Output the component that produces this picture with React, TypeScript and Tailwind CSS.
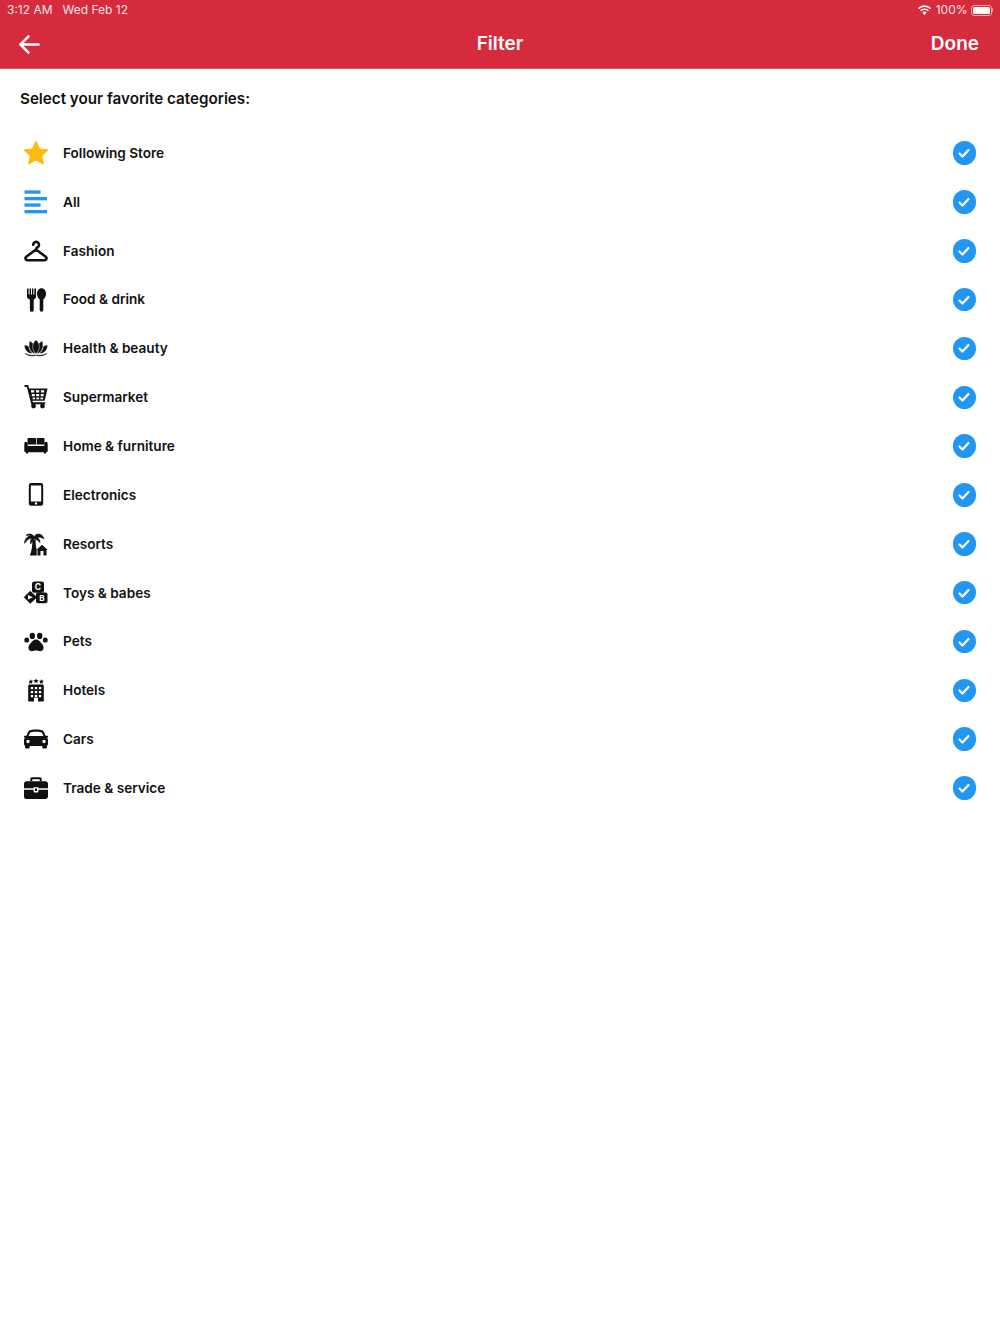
import { ReactNode } from "react";

const Svg = ({ children }: { children: ReactNode }) => (
  <svg viewBox="0 0 28 28" className="w-7 h-7 shrink-0" fill="currentColor">
    {children}
  </svg>
);

const icons: Record<string, ReactNode> = {
  star: (
    <path
      d="M14 2.600l3.400 7.500 8.100.9-6 5.600 1.600 8.100L14 20.600l-7.100 4.100 1.600-8.100-6-5.600 8.100-.9z"
      fill="#ffbb0d"
      stroke="#ffbb0d"
      strokeWidth="1.400"
      strokeLinejoin="round"
    />
  ),
  all: (
    <g fill="#2196f3">
      <rect x="2.500" y="2.400" width="16" height="3.300" />
      <rect x="2.500" y="9" width="22.500" height="3.300" />
      <rect x="2.500" y="15.400" width="16" height="3.300" />
      <rect x="2.500" y="22" width="22.500" height="3.300" />
    </g>
  ),
  hanger: (
    <path
      d="M11.200 7.800a2.900 2.900 0 1 1 4.500 2.400c-1.100.7-1.700 1.200-1.700 2.300M14 12.500l9.400 7c2 1.500 1.200 3.700-1 3.700H5.600c-2.200 0-3-2.200-1-3.700z"
      fill="none"
      stroke="currentColor"
      strokeWidth="2.600"
      strokeLinecap="round"
      strokeLinejoin="round"
    />
  ),
  food: (
    <g>
      <path d="M5 2.500h1.600v6h1v-6h1.400v6h1v-6h1.400v6h1V2.500H14v8c0 1.600-1 2.600-2.300 3v10.400a1.900 1.900 0 0 1-3.800 0V13.500C6 13.100 5 12.100 5 10.500z" />
      <path d="M19.500 2.300c2.600 0 4.500 2.400 4.500 5.500 0 2.800-1.300 4.800-2.700 5.500v10.600a1.800 1.800 0 0 1-3.600 0V13.300c-1.400-.7-2.700-2.700-2.700-5.500 0-3.100 1.900-5.500 4.500-5.500z" />
    </g>
  ),
  lotus: (
    <g stroke="currentColor" strokeWidth="0.400">
      <path d="M14 6.300c3.700 3.400 4.200 8.700 0 13.300-4.200-4.600-3.700-9.900 0-13.300z" />
      <path d="M7.800 7.600c1.100.4 2.100 1 2.900 1.800-.9 3.700-.2 7 1.900 9.800-3.800-.5-6.200-5.700-4.800-11.600z" />
      <path d="M20.200 7.600c-1.100.4-2.100 1-2.900 1.800.9 3.700.2 7-1.900 9.800 3.800-.5 6.200-5.700 4.800-11.600z" />
      <path d="M2.800 11.500c1.300 0 2.500.3 3.500.9.400 2.500 1.500 4.800 3.500 6.700-3.900.2-7-3.300-7-7.600z" />
      <path d="M25.200 11.500c-1.300 0-2.500.3-3.500.9-.4 2.500-1.500 4.800-3.500 6.700 3.900.2 7-3.300 7-7.600z" />
      <path d="M3 19.300c2.800 1.600 6.400 2.300 9.800 1.700l1.200.5 1.200-.5c3.400.6 7 0 9.800-1.700-2 2.200-7 3.500-11 2-4 1.500-9 .2-11-2z" />
    </g>
  ),
  cart: (
    <g>
      <path d="M2.500 2h3.700l1 3.400h18.300l-2.800 12.300H10.500l.4 1.500h12.300v2H9.300L4.900 4H2.500z" />
      <g fill="#fff">
        <rect x="9" y="7.200" width="3.200" height="2.300" />
        <rect x="14" y="7.200" width="3.200" height="2.300" />
        <rect x="19" y="7.200" width="3.200" height="2.300" />
        <rect x="9.800" y="11" width="3" height="2.300" />
        <rect x="14.200" y="11" width="3" height="2.300" />
        <rect x="18.700" y="11" width="3" height="2.300" />
        <rect x="10.600" y="14.600" width="2.600" height="1.700" />
        <rect x="14.500" y="14.600" width="2.600" height="1.700" />
        <rect x="18.400" y="14.600" width="2.600" height="1.700" />
      </g>
      <circle cx="11.500" cy="23" r="2.400" />
      <circle cx="20.500" cy="23" r="2.400" />
    </g>
  ),
  sofa: (
    <g>
      <path d="M6.500 6h6.700c.5 0 .8.300.8.800v5.700H5.500V7c0-.6.400-1 1-1zM15.200 6h6.300c.6 0 1 .4 1 1v5.500h-7.800V6.500c0-.3.200-.5.500-.5z" />
      <path d="M2.300 11.500c0-1 .7-1.700 1.700-1.700s1.700.7 1.700 1.700V14h16.600v-2.500c0-1 .7-1.700 1.700-1.700s1.700.7 1.700 1.700V19c0 .7-.5 1.200-1.200 1.200h-.5v1.300h-2.200v-1.300H6.200v1.300H4v-1.300h-.5c-.7 0-1.200-.5-1.200-1.200z" />
    </g>
  ),
  phone: (
    <path
      fillRule="evenodd"
      d="M9 2h10a2.200 2.200 0 0 1 2.200 2.200v18.300a2.200 2.200 0 0 1-2.200 2.200H9a2.200 2.200 0 0 1-2.200-2.200V4.200A2.200 2.200 0 0 1 9 2zm-.2 2.600v15.900h10.400V4.600zM14 21.200a1.200 1.200 0 1 0 0 2.400 1.200 1.200 0 0 0 0-2.400z"
    />
  ),
  palm: (
    <g>
      <path
        d="M12.800 7.800C11.300 4.300 7.300 2.700 4 5.500c2-.5 3.700-.4 5 .1-3.900.8-6.500 3.700-6.300 7.700 1.600-3 4.100-4.900 7-5.300-1 1.500-1.500 3.500-1 6 1-2.500 2.400-4.300 4.200-5 1.800.4 3.400 1.600 5 3.600.1-2.300-1-4-2.700-5.100 2.600-.7 4.700-.1 6.700 1.300-.9-3.300-3.500-5.200-6.600-4.600-1.200.2-2 .8-2.500 1.600z"
        stroke="currentColor"
        strokeWidth="0.700"
        strokeLinejoin="round"
      />
      <path d="M10.300 10h3.400c-.2 3.200.1 6.500 1 9.800v5.600H7.800c2-4.700 2.700-10 2.500-15.400z" />
      <path fillRule="evenodd" d="M20 14.800l5.700 5.300h-1.200v5.300h-9V20.100h-1.200zm-1.500 6.300v4.300h3v-4.300z" />
    </g>
  ),
  toys: (
    <g>
      <rect x="10" y="2.500" width="12" height="11.300" rx="2.200" />
      <rect x="14" y="13.500" width="11.500" height="10.800" rx="2" />
      <path d="M8.200 12.300l6.600 6-6.600 6-6-6z" stroke="currentColor" strokeWidth="0.800" strokeLinejoin="round" />
      <text x="16" y="11.400" textAnchor="middle" fontSize="8.500" fontWeight="700" fill="#fff" fontFamily="Inter, sans-serif">C</text>
      <text x="19.800" y="22.200" textAnchor="middle" fontSize="8" fontWeight="700" fill="#fff" fontFamily="Inter, sans-serif">B</text>
      <path d="M6 16l4.800 2.300L6 20.600z" fill="#fff" />
    </g>
  ),
  paw: (
    <g>
      <ellipse cx="4.700" cy="12" rx="2.400" ry="2.600" />
      <ellipse cx="10.300" cy="7.900" rx="2.700" ry="3.100" />
      <ellipse cx="17.700" cy="7.900" rx="2.700" ry="3.100" />
      <ellipse cx="23.300" cy="12" rx="2.400" ry="2.600" />
      <path d="M14 11.500c2.600 0 3.900 1.900 5.100 3.600 1.200 1.500 2.500 2.600 2.500 4.600 0 2.200-1.700 3.500-3.400 3.500-1.700 0-2.700-.7-4.200-.7s-2.500.7-4.200.7c-1.700 0-3.400-1.300-3.400-3.500 0-2 1.300-3.100 2.500-4.600 1.200-1.700 2.500-3.600 5.100-3.600z" />
    </g>
  ),
  hotel: (
    <g>
      <path d="M8.700 3l.8 1.600 1.700.2-1.200 1.200.3 1.700-1.600-.8-1.600.8.300-1.700L7 4.800l1.700-.2zM14 2.400l.8 1.600 1.700.2-1.200 1.200.3 1.700-1.600-.8-1.600.8.300-1.700-1.200-1.200 1.700-.2zM19.300 3l.8 1.600 1.700.2-1.200 1.200.3 1.700-1.600-.8-1.600.8.300-1.700L17.300 4.800l1.700-.2z" />
      <path
        fillRule="evenodd"
        d="M7.500 8.500h13c.7 0 1.300.6 1.300 1.300v15.700H16v-3.700h-4v3.700H6.200V9.800c0-.7.600-1.300 1.300-1.300zm1.300 2.500v2.300h2.300V11zm4 0v2.300h2.400V11zm4.100 0v2.300h2.300V11zm-8.100 4v2.300h2.300V15zm4 0v2.300h2.400V15zm4.100 0v2.300h2.300V15zm-8.100 4v2.200h2.300V19zm8.100 0v2.200h2.300V19zm-4.100 0v2.200h2.400V19z"
      />
    </g>
  ),
  car: (
    <path
      fillRule="evenodd"
      d="M9 5c3.300-.6 6.700-.6 10 0 1.500.3 2.600 1.100 3.200 2.500l1.400 3.300h1.700c.5 0 .9.400.9.900s-.4.900-.9.900h-.6c.8.700 1.300 1.700 1.300 2.800V19c0 .8-.4 1.400-1 1.700v1.600c0 .6-.4 1.100-1 1.100h-2.700c-.6 0-1-.5-1-1.100v-1.200H7.700v1.200c0 .6-.4 1.100-1 1.100H4c-.6 0-1-.5-1-1.100v-1.600c-.6-.3-1-.9-1-1.700v-3.600c0-1.100.5-2.100 1.300-2.800h-.6c-.5 0-.9-.4-.9-.9s.4-.9.900-.9h1.700l1.400-3.300C6.400 6.100 7.500 5.300 9 5zm.2 2.200c-.7.100-1.200.5-1.500 1.200L6.600 11h14.800l-1.100-2.600c-.3-.7-.8-1.100-1.500-1.200-3.200-.5-6.400-.5-9.600 0zM6 14.800a1.700 1.700 0 1 0 0 3.400 1.700 1.700 0 0 0 0-3.400zm16 0a1.700 1.700 0 1 0 0 3.400 1.700 1.700 0 0 0 0-3.400z"
    />
  ),
  case: (
    <g>
      <path
        fillRule="evenodd"
        d="M10 3.300h8c1 0 1.700.7 1.700 1.700v2.200h-2V5.300h-7.400v1.900h-2V5c0-1 .7-1.700 1.700-1.700z"
      />
      <path d="M4.500 7.200h19c1.400 0 2.500 1.100 2.500 2.500v4.600H16.400v-1h-4.800v1H2V9.700c0-1.400 1.100-2.500 2.500-2.500z" />
      <path d="M2 15.800h9.600v1.400c0 .8.600 1.400 1.400 1.400h2c.8 0 1.400-.6 1.400-1.400v-1.400H26v6.700c0 1.400-1.100 2.500-2.500 2.500h-19A2.500 2.500 0 0 1 2 22.500z" />
      <rect x="13" y="14.500" width="2" height="2.500" />
    </g>
  ),
};

const categories = [
  { name: "Following Store", icon: "star" },
  { name: "All", icon: "all" },
  { name: "Fashion", icon: "hanger" },
  { name: "Food & drink", icon: "food" },
  { name: "Health & beauty", icon: "lotus" },
  { name: "Supermarket", icon: "cart" },
  { name: "Home & furniture", icon: "sofa" },
  { name: "Electronics", icon: "phone" },
  { name: "Resorts", icon: "palm" },
  { name: "Toys & babes", icon: "toys" },
  { name: "Pets", icon: "paw" },
  { name: "Hotels", icon: "hotel" },
  { name: "Cars", icon: "car" },
  { name: "Trade & service", icon: "case" },
];

const App = () => {
  return (
    <div className="w-full min-h-[1334px] bg-white text-[#111] font-['Inter',sans-serif]">
      <div className="h-[69px] bg-[#d62b3c] border-b border-[#e0596a] text-white flex flex-col">
        <div className="h-5 flex items-center justify-between pl-[7px] pr-[7px] text-[12px] text-[#fbe4e6]">
          <div className="flex items-center gap-[10px]">
            <span>3:12 AM</span>
            <span>Wed Feb 12</span>
          </div>
          <div className="flex items-center">
            <svg viewBox="0 0 16 12" className="w-[15px] h-[11px] mr-[4px]" fill="white">
              <path d="M8 2.200c2.300 0 4.400.9 6 2.400l1.200-1.300A10.500 10.500 0 0 0 8 .4 10.500 10.500 0 0 0 .8 3.300L2 4.600a8.700 8.700 0 0 1 6-2.400z" />
              <path d="M8 5.400c1.400 0 2.700.5 3.700 1.500l1.200-1.300A7.200 7.200 0 0 0 8 3.700a7.200 7.200 0 0 0-4.900 1.900l1.200 1.300c1-1 2.300-1.500 3.700-1.500z" />
              <path d="M8 7c-.9 0-1.800.4-2.400 1L8 11.200 10.400 8C9.800 7.400 8.900 7 8 7z" />
            </svg>
            <span className="mr-[3px]">100%</span>
            <div className="flex items-center">
              <div className="w-[21px] h-[11px] rounded-[3px] border border-[#f0a5ad] p-px">
                <div className="w-full h-full rounded-[1.5px] bg-white" />
              </div>
              <div className="w-[1.5px] h-1 rounded-r-sm bg-[#f0a5ad]" />
            </div>
          </div>
        </div>
        <div className="flex-1 relative flex items-center justify-between pl-[18px] pr-[21px] pt-px">
          <svg
            viewBox="0 0 24 24"
            className="w-[23px] h-[23px]"
            fill="none"
            stroke="white"
            strokeWidth="2.600"
            strokeLinecap="round"
            strokeLinejoin="round"
          >
            <path d="M21.500 12H2.500M11 3.500L2.500 12l8.500 8.500" />
          </svg>
          <span className="absolute left-0 right-0 text-center text-[19px] font-semibold">
            Filter
          </span>
          <span className="text-[19px] font-semibold">Done</span>
        </div>
      </div>

      <h1 className="pl-5 pt-[19px] text-[15.2px] leading-[22px] font-semibold">
        Select your favorite categories:
      </h1>

      <ul className="mt-[18.700px]">
        {categories.map((c) => (
          <li
            key={c.name}
            className="h-[48.85px] flex items-center pl-[21.500px] pr-6"
          >
            <Svg>{icons[c.icon]}</Svg>
            <span className="ml-[13.500px] flex-1 text-[13.6px] font-semibold">
              {c.name}
            </span>
            <span className="w-[23.500px] h-[23.500px] rounded-full bg-[#2196f3] flex items-center justify-center">
              <svg
                viewBox="0 0 14 14"
                className="w-[14px] h-[14px]"
                fill="none"
                stroke="white"
                strokeWidth="2.200"
                strokeLinecap="round"
                strokeLinejoin="round"
              >
                <path d="M2.500 7.500l3 3 6-6.500" />
              </svg>
            </span>
          </li>
        ))}
      </ul>
    </div>
  );
};

export default App;
